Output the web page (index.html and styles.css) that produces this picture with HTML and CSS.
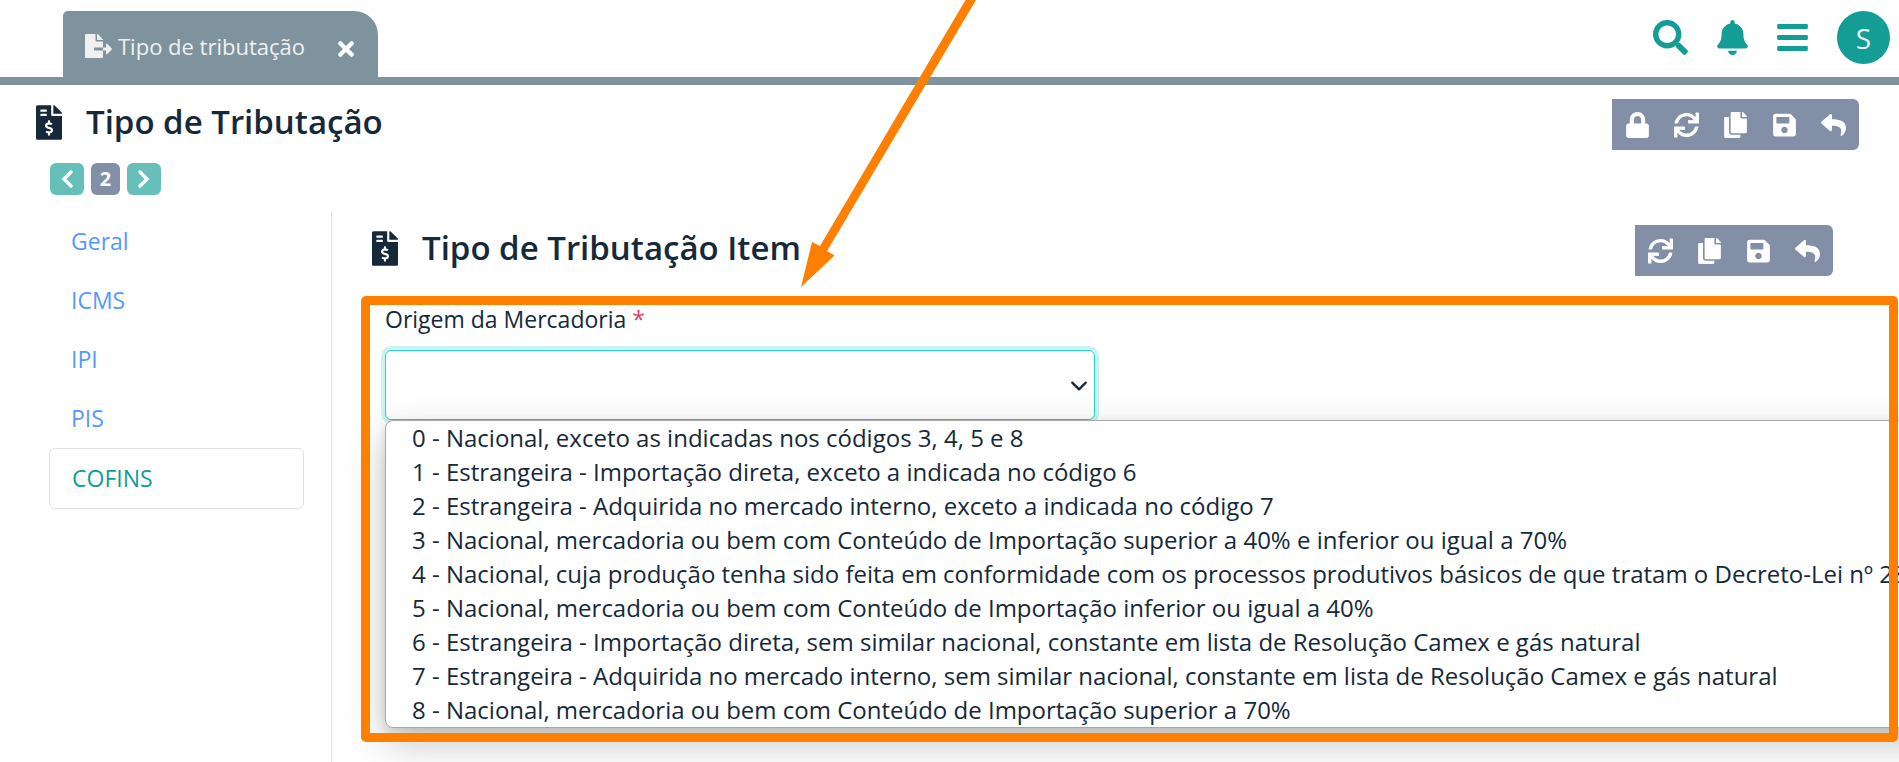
FILE: index.html
```html
<!DOCTYPE html>
<html lang="pt-BR">
<head>
<meta charset="utf-8">
<title>Tipo de tributação</title>
<link rel="stylesheet" href="styles.css">
</head>
<body>
<svg class="sprite" aria-hidden="true">
  <symbol id="i-export" viewBox="0 0 576 512"><path d="M384 121.9c0-6.3-2.5-12.4-7-16.9L279.1 7c-4.5-4.5-10.6-7-17-7H256v128h128zM571 308l-95.7-96.4c-10.1-10.1-27.4-3-27.4 11.3V288h-64v64h64v65.2c0 14.3 17.3 21.4 27.4 11.3L571 332c6.6-6.6 6.6-17.4 0-24zm-379 28v-32c0-8.8 7.2-16 16-16h176V160H248c-13.2 0-24-10.8-24-24V0H24C10.7 0 0 10.7 0 24v464c0 13.3 10.7 24 24 24h336c13.3 0 24-10.7 24-24V352H208c-8.8 0-16-7.2-16-16z"/></symbol>
  <symbol id="i-times" viewBox="0 80 352 352"><path d="M242.72 256l100.07-100.07c12.28-12.28 12.28-32.19 0-44.48l-22.24-22.24c-12.28-12.28-32.19-12.28-44.48 0L176 189.28 75.93 89.21c-12.28-12.28-32.19-12.28-44.48 0L9.21 111.45c-12.28 12.28-12.28 32.19 0 44.48L109.28 256 9.21 356.07c-12.28 12.28-12.28 32.19 0 44.48l22.24 22.24c12.28 12.28 32.2 12.28 44.48 0L176 322.72l100.07 100.07c12.28 12.28 32.2 12.28 44.48 0l22.24-22.24c12.28-12.28 12.28-32.19 0-44.48L242.72 256z"/></symbol>
  <symbol id="i-search" viewBox="0 0 512 512"><path d="M505 442.7L405.3 343c-4.5-4.5-10.6-7-17-7H372c27.6-35.3 44-79.7 44-128C416 93.1 322.9 0 208 0S0 93.1 0 208s93.1 208 208 208c48.3 0 92.7-16.4 128-44v16.3c0 6.4 2.5 12.5 7 17l99.7 99.7c9.4 9.4 24.6 9.4 33.9 0l28.3-28.3c9.4-9.4 9.4-24.6.1-34zM208 336c-70.7 0-128-57.2-128-128 0-70.7 57.2-128 128-128 70.7 0 128 57.2 128 128 0 70.7-57.2 128-128 128z"/></symbol>
  <symbol id="i-bell" viewBox="0 0 448 512"><path d="M224 512c35.32 0 63.97-28.65 63.97-64H160.03c0 35.35 28.65 64 63.97 64zm215.39-149.71c-19.32-20.76-55.47-51.99-55.47-154.29 0-77.7-54.48-139.9-127.94-155.16V32c0-17.67-14.32-32-31.98-32s-31.98 14.33-31.98 32v20.84C118.56 68.1 64.08 130.3 64.08 208c0 102.3-36.15 133.53-55.47 154.29-6 6.45-8.66 14.16-8.61 21.71.11 16.4 12.98 32 32.1 32h383.8c19.12 0 32-15.6 32.1-32 .05-7.55-2.61-15.27-8.61-21.71z"/></symbol>
  <symbol id="i-bars" viewBox="0 0 448 512"><rect y="60" width="448" height="72" rx="16"/><rect y="220" width="448" height="72" rx="16"/><rect y="380" width="448" height="72" rx="16"/></symbol>
  <symbol id="i-invoice" viewBox="0 0 384 512"><path d="M377 105L279.1 7c-4.5-4.5-10.6-7-17-7H256v128h128v-6.1c0-6.3-2.5-12.4-7-16.9zm-153 31V0H24C10.7 0 0 10.7 0 24v464c0 13.3 10.7 24 24 24h336c13.3 0 24-10.7 24-24V160H248c-13.2 0-24-10.8-24-24zM64 72c0-4.42 3.58-8 8-8h80c4.42 0 8 3.58 8 8v16c0 4.42-3.58 8-8 8H72c-4.42 0-8-3.58-8-8V72zm0 80v-16c0-4.42 3.58-8 8-8h80c4.42 0 8 3.58 8 8v16c0 4.42-3.58 8-8 8H72c-4.42 0-8-3.58-8-8zm144 263.88V440c0 4.42-3.58 8-8 8h-16c-4.42 0-8-3.58-8-8v-24.29c-11.29-.58-22.27-4.52-31.37-11.35-3.9-2.93-4.1-8.77-.57-12.14l11.75-11.21c2.77-2.64 6.89-2.76 10.13-.73 3.87 2.42 8.26 3.72 12.82 3.72h28.11c6.5 0 11.8-5.92 11.8-13.19 0-5.95-3.61-11.19-8.77-12.73l-45-13.5c-18.59-5.58-31.58-23.42-31.58-43.39 0-24.52 19.05-44.44 42.67-45.07V232c0-4.42 3.58-8 8-8h16c4.42 0 8 3.58 8 8v24.29c11.29.58 22.27 4.51 31.37 11.35 3.9 2.93 4.1 8.77.57 12.14l-11.75 11.21c-2.77 2.64-6.89 2.76-10.13.73-3.87-2.43-8.26-3.72-12.82-3.72h-28.11c-6.5 0-11.8 5.92-11.8 13.19 0 5.95 3.61 11.19 8.77 12.73l45 13.5c18.59 5.58 31.58 23.42 31.58 43.39 0 24.53-19.05 44.44-42.67 45.07z"/></symbol>
  <symbol id="i-lock" viewBox="0 0 448 512"><path d="M400 224h-24v-72C376 68.2 307.8 0 224 0S72 68.2 72 152v72H48c-26.5 0-48 21.5-48 48v192c0 26.5 21.5 48 48 48h352c26.5 0 48-21.5 48-48V272c0-26.5-21.5-48-48-48zm-104 0H152v-72c0-39.7 32.3-72 72-72s72 32.3 72 72v72z"/></symbol>
  <symbol id="i-sync" viewBox="0 0 512 512"><path d="M440.65 12.57l4 82.77A247.16 247.16 0 0 0 255.83 8C134.73 8 33.91 94.92 12.29 209.82A12 12 0 0 0 24.09 224h49.05a12 12 0 0 0 11.67-9.26 175.91 175.91 0 0 1 317-56.94l-101.46-4.86a12 12 0 0 0-12.57 12v47.41a12 12 0 0 0 12 12H500a12 12 0 0 0 12-12V12a12 12 0 0 0-12-12h-47.37a12 12 0 0 0-11.98 12.57zM255.83 432a175.61 175.61 0 0 1-146-77.8l101.8 4.87a12 12 0 0 0 12.57-12v-47.4a12 12 0 0 0-12-12H12a12 12 0 0 0-12 12V500a12 12 0 0 0 12 12h47.35a12 12 0 0 0 12-12.6l-4.15-82.57A247.17 247.17 0 0 0 255.83 504c121.11 0 221.93-86.92 243.55-201.82a12 12 0 0 0-11.8-14.18h-49.05a12 12 0 0 0-11.67 9.26A175.86 175.86 0 0 1 255.83 432z"/></symbol>
  <symbol id="i-copy" viewBox="0 0 448 512"><path d="M320 448v40c0 13.255-10.745 24-24 24H24c-13.255 0-24-10.745-24-24V120c0-13.255 10.745-24 24-24h72v296c0 30.879 25.121 56 56 56h168zm0-344V0H152c-13.255 0-24 10.745-24 24v368c0 13.255 10.745 24 24 24h272c13.255 0 24-10.745 24-24V128H344c-13.2 0-24-10.8-24-24zm120.971-31.029L375.029 7.029A24 24 0 0 0 358.059 0H352v96h96v-6.059a24 24 0 0 0-7.029-16.97z"/></symbol>
  <symbol id="i-save" viewBox="0 0 448 512"><path d="M433.941 129.941l-83.882-83.882A48 48 0 0 0 316.118 32H48C21.49 32 0 53.49 0 80v352c0 26.51 21.49 48 48 48h352c26.51 0 48-21.49 48-48V163.882a48 48 0 0 0-14.059-33.941zM224 416c-35.346 0-64-28.654-64-64 0-35.346 28.654-64 64-64s64 28.654 64 64c0 35.346-28.654 64-64 64zm96-304.52V212c0 6.627-5.373 12-12 12H76c-6.627 0-12-5.373-12-12V108c0-6.627 5.373-12 12-12h228.52c3.183 0 6.235 1.264 8.485 3.515l3.48 3.48A11.996 11.996 0 0 1 320 111.48z"/></symbol>
  <symbol id="i-reply" viewBox="0 0 512 512"><path d="M8.309 189.836L184.313 37.851C199.719 24.546 224 35.347 224 56.015v80.053c160.629 1.839 288 34.032 288 186.258 0 61.441-39.581 122.309-83.333 154.132-13.653 9.931-33.111-2.533-28.077-18.631 45.344-145.012-21.507-183.51-176.59-185.742V360c0 20.7-24.3 31.453-39.687 18.164l-176.004-152c-11.071-9.562-11.086-26.753 0-36.328z"/></symbol>
  <symbol id="i-prev" viewBox="0 0 12 18"><path d="M10 2L3 9l7 7" fill="none" stroke="currentColor" stroke-width="3.4" stroke-linecap="round"/></symbol>
  <symbol id="i-next" viewBox="0 0 12 18"><path d="M2 2l7 7-7 7" fill="none" stroke="currentColor" stroke-width="3.4" stroke-linecap="round"/></symbol>
</svg>

<header class="topbar">
  <div class="tab">
    <svg class="tab-icon"><use href="#i-export"/></svg>
    <span class="tab-label">Tipo de tributação</span>
    <button class="tab-close" type="button" aria-label="Fechar"><svg><use href="#i-times"/></svg></button>
  </div>
  <nav class="top-actions" aria-label="Ações globais">
    <button type="button" aria-label="Pesquisar"><svg class="ic-search"><use href="#i-search"/></svg></button>
    <button type="button" aria-label="Notificações"><svg class="ic-top"><use href="#i-bell"/></svg></button>
    <button type="button" aria-label="Menu"><svg class="ic-top"><use href="#i-bars"/></svg></button>
    <button type="button" class="avatar" aria-label="Usuário S">S</button>
  </nav>
</header>

<div class="page-head">
  <h1 class="title"><svg><use href="#i-invoice"/></svg>Tipo de Tributação</h1>
  <div class="toolbar" role="toolbar" aria-label="Ações">
    <button type="button" aria-label="Bloquear"><svg><use href="#i-lock"/></svg></button>
    <button type="button" aria-label="Atualizar"><svg><use href="#i-sync"/></svg></button>
    <button type="button" aria-label="Copiar"><svg><use href="#i-copy"/></svg></button>
    <button type="button" aria-label="Salvar"><svg><use href="#i-save"/></svg></button>
    <button type="button" aria-label="Voltar"><svg><use href="#i-reply"/></svg></button>
  </div>
</div>

<div class="pager">
  <button type="button" aria-label="Anterior"><svg><use href="#i-prev"/></svg></button>
  <span class="pager-current">2</span>
  <button type="button" aria-label="Próximo"><svg><use href="#i-next"/></svg></button>
</div>

<div class="layout">
  <nav class="side" aria-label="Seções">
    <a href="#geral">Geral</a>
    <a href="#icms">ICMS</a>
    <a href="#ipi">IPI</a>
    <a href="#pis">PIS</a>
    <a href="#cofins" class="active" aria-current="page">COFINS</a>
  </nav>
  <main class="content">
    <div class="section-head">
      <h2 class="title"><svg><use href="#i-invoice"/></svg>Tipo de Tributação Item</h2>
      <div class="toolbar" role="toolbar" aria-label="Ações do item">
        <button type="button" aria-label="Atualizar item"><svg><use href="#i-sync"/></svg></button>
        <button type="button" aria-label="Copiar item"><svg><use href="#i-copy"/></svg></button>
        <button type="button" aria-label="Salvar item"><svg><use href="#i-save"/></svg></button>
        <button type="button" aria-label="Voltar item"><svg><use href="#i-reply"/></svg></button>
      </div>
    </div>
    <div class="highlighted">
      <form class="form-grid">
        <div class="field">
          <label for="origem">Origem da Mercadoria <span class="req">*</span></label>
          <div class="select-wrap">
            <select id="origem"><option value=""></option></select>
            <svg class="chevron" viewBox="0 0 16 16" aria-hidden="true"><path d="M2 5l6 6 6-6" fill="none" stroke="currentColor" stroke-width="2" stroke-linecap="round" stroke-linejoin="round"/></svg>
          </div>
        </div>
      </form>
      <ul class="options" role="listbox" aria-label="Origem da Mercadoria">
        <li role="option">0 - Nacional, exceto as indicadas nos códigos 3, 4, 5 e 8</li>
        <li role="option">1 - Estrangeira - Importação direta, exceto a indicada no código 6</li>
        <li role="option">2 - Estrangeira - Adquirida no mercado interno, exceto a indicada no código 7</li>
        <li role="option">3 - Nacional, mercadoria ou bem com Conteúdo de Importação superior a 40% e inferior ou igual a 70%</li>
        <li role="option">4 - Nacional, cuja produção tenha sido feita em conformidade com os processos produtivos básicos de que tratam o Decreto-Lei nº 288</li>
        <li role="option">5 - Nacional, mercadoria ou bem com Conteúdo de Importação inferior ou igual a 40%</li>
        <li role="option">6 - Estrangeira - Importação direta, sem similar nacional, constante em lista de Resolução Camex e gás natural</li>
        <li role="option">7 - Estrangeira - Adquirida no mercado interno, sem similar nacional, constante em lista de Resolução Camex e gás natural</li>
        <li role="option">8 - Nacional, mercadoria ou bem com Conteúdo de Importação superior a 70%</li>
      </ul>
      <div class="frame"></div>
    </div>
  </main>
</div>

<svg class="arrow" viewBox="0 0 180 290" aria-hidden="true"><polygon points="165.500,0 176,0 27,251 34.500,255.500 1,287 12,242 20,246"/></svg>
</body>
</html>
```

FILE: styles.css
```css
* { box-sizing: border-box; }

body {
  margin: 0;
  min-height: 100vh;
  display: flex;
  flex-direction: column;
  position: relative;
  overflow: hidden;
  background: #fff;
  color: #15293a;
  font: 23px/34px "Open Sans", "Noto Sans", sans-serif;
}

button {
  border: 0;
  padding: 0;
  background: none;
  color: inherit;
  font: inherit;
  display: flex;
  align-items: center;
  justify-content: center;
}

svg { fill: currentColor; display: block; flex: none; }
.sprite { position: absolute; width: 0; height: 0; }

/* Top bar */
.topbar {
  display: flex;
  justify-content: space-between;
  padding: 11px 9px 0 63px;
  border-bottom: 8px solid #7e939e;
}

.tab {
  display: flex;
  align-items: center;
  height: 66px;
  padding: 4px 24px 0 22px;
  border-radius: 5px 24px 0 0;
  background: #7e939e;
  color: #f0f0f0;
  font-size: 22px;
}
.tab-icon { width: 27px; height: 24px; }
.tab-label { margin: 0 33px 0 6px; }
.tab-close { color: #fff; padding-top: 5px; }
.tab-close svg { width: 16px; height: 16px; }

.top-actions { display: flex; align-items: flex-start; gap: 29px; color: #139d94; }
.top-actions button { height: 53px; }
.ic-search { width: 35px; height: 35px; }
.ic-top { width: 31px; height: 35px; }
.top-actions .avatar {
  width: 53px;
  border-radius: 50%;
  background: #139d94;
  color: #e8f2f2;
  font-size: 28px;
}

/* Headings */
.page-head,
.section-head {
  display: flex;
  align-items: flex-start;
  justify-content: space-between;
}
.page-head { padding: 14px 40px 0 36px; }
.section-head { padding: 14px 66px 0 40px; }
.title {
  display: flex;
  align-items: center;
  gap: 24px;
  margin: 0;
  font-size: 33px;
  line-height: 46px;
  font-weight: 600;
}
.title svg { width: 26px; height: 35px; }

.toolbar {
  display: flex;
  align-items: center;
  gap: 24px;
  height: 51px;
  padding: 0 13px;
  border-radius: 0 6px 6px 0;
  background: #838fa6;
  color: #fff;
}
.toolbar svg { width: 25px; height: 26px; }

.pager { display: flex; gap: 7px; padding: 13px 50px 0; color: #fff; }
.pager button,
.pager-current {
  height: 32px;
  border-radius: 6px;
}
.pager button { width: 34px; background: #66bfb8; }
.pager button svg { width: 12px; height: 18px; }
.pager-current {
  width: 29px;
  background: #838fa6;
  font-size: 20px;
  line-height: 32px;
  font-weight: 700;
  text-align: center;
}

/* Body */
.layout { display: flex; flex: 1; padding-top: 16px; }
.side {
  display: flex;
  flex-direction: column;
  width: 332px;
  padding: 1px 27px 0 49px;
  border-right: 1px solid #dee2e6;
}
.side a {
  padding: 12px 22px 13px;
  color: #5599ff;
  text-decoration: none;
}
.side .active {
  border: 1px solid #dee2e6;
  border-radius: 6px;
  color: #139d94;
}

.content { flex: 1; min-width: 0; }
.highlighted { position: relative; margin: 20px 1px 0 29px; padding: 6px 70px 0 24px; }
.form-grid { display: grid; grid-template-columns: 1fr 1fr; gap: 24px; }
.field label { display: block; margin-bottom: 14px; }
.req { color: #e0406f; }
.select-wrap { position: relative; }
.select-wrap select {
  display: block;
  width: 100%;
  height: 70px;
  appearance: none;
  border: 1px solid #27d3c8;
  border-radius: 6px;
  background: #fff;
  box-shadow: 0 0 0 4px #c8f5f1;
  font: inherit;
  color: inherit;
}
.chevron { position: absolute; right: 7px; top: 27px; width: 18px; height: 18px; }

.options {
  position: absolute;
  top: 124px;
  left: 24px;
  right: -60px;
  margin: 0;
  padding: 0;
  list-style: none;
  font-size: 24px;
  white-space: nowrap;
  border: 1px solid #a8a8a8;
  border-radius: 8px;
  background: #fff;
  box-shadow: 0 16px 40px rgba(0, 0, 0, .22), 0 4px 12px rgba(0, 0, 0, .12);
}
.options li { padding-left: 26px; }

/* Call-out drawn over the field and its list */
.frame {
  position: absolute;
  inset: 0 0 auto 0;
  height: 446px;
  border: 9px solid #ff8000;
  border-radius: 5px;
  pointer-events: none;
}
.arrow {
  position: absolute;
  top: 0;
  left: 800px;
  width: 180px;
  height: 290px;
  color: #ff8000;
  pointer-events: none;
}
```
